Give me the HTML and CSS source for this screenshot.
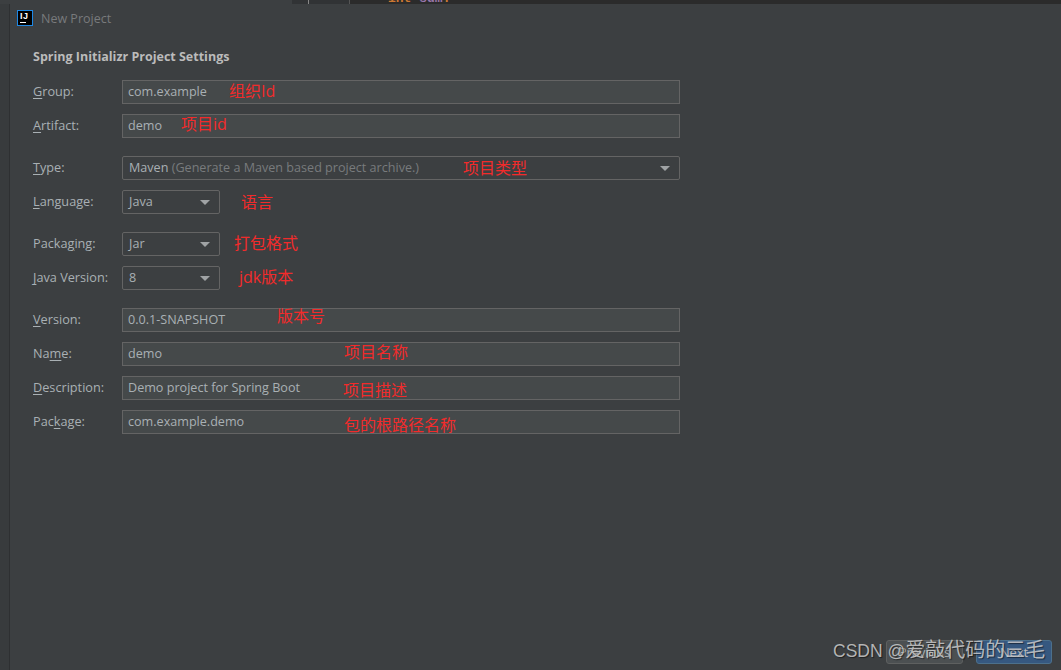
FILE: index.html
```html
<!DOCTYPE html>
<html lang="zh">
<head>
<meta charset="utf-8">
<title>New Project</title>
<link rel="stylesheet" href="styles.css">
</head>
<body>
<div class="editor-strip">
  <div class="strip-left"></div>
  <div class="strip-gutter"><span class="fold"></span></div>
  <div class="strip-code"><span class="kw">int</span> <span class="var">sum</span><span class="kw">:</span></div>
</div>
<div class="window">
  <div class="side"></div>
  <main class="dialog">
    <header class="titlebar">
      <span class="logo"><span class="logo-text">IJ</span><span class="logo-bar"></span></span>
      <span class="title">New Project</span>
    </header>
    <section class="form">
      <h1 class="heading">Spring Initializr Project Settings</h1>

      <div class="group">
        <div class="row"><label class="label"><u>G</u>roup:</label><div class="field input">com.example</div><span class="note note-group">组织Id</span></div>
        <div class="row"><label class="label"><u>A</u>rtifact:</label><div class="field input">demo</div><span class="note note-artifact">项目id</span></div>
      </div>

      <div class="group">
        <div class="row"><label class="label"><u>T</u>ype:</label><div class="field select"><span class="val">Maven <span class="hint">(Generate a Maven based project archive.)</span></span><span class="arrow"></span></div><span class="note note-type">项目类型</span></div>
        <div class="row"><label class="label"><u>L</u>anguage:</label><div class="field select small"><span class="val">Java</span><span class="arrow"></span></div><span class="note note-lang">语言</span></div>
      </div>

      <div class="group">
        <div class="row"><label class="label">Packa<u>g</u>ing:</label><div class="field select small"><span class="val">Jar</span><span class="arrow"></span></div><span class="note note-pack">打包格式</span></div>
        <div class="row"><label class="label"><u>J</u>ava Version:</label><div class="field select small"><span class="val">8</span><span class="arrow"></span></div><span class="note note-jdk">jdk版本</span></div>
      </div>

      <div class="group">
        <div class="row"><label class="label"><u>V</u>ersion:</label><div class="field input">0.0.1-SNAPSHOT</div><span class="note note-version">版本号</span></div>
        <div class="row"><label class="label">Na<u>m</u>e:</label><div class="field input">demo</div><span class="note note-name">项目名称</span></div>
        <div class="row"><label class="label"><u>D</u>escription:</label><div class="field input">Demo project for Spring Boot</div><span class="note note-desc">项目描述</span></div>
        <div class="row"><label class="label">Pac<u>k</u>age:</label><div class="field input">com.example.demo</div><span class="note note-pkg">包的根路径名称</span></div>
      </div>
    </section>
    <footer class="footer">
      <button class="btn">Previous</button>
      <button class="btn primary">Next</button>
    </footer>
  </main>
</div>
<div class="watermark"><span class="wm-latin">CSDN @</span>爱敲代码的三毛</div>
</body>
</html>
```
FILE: styles.css
```css
* { box-sizing: border-box; }
html, body { margin: 0; height: 100%; overflow: hidden; }
body {
  background: #3c3f41;
  font-family: "Open Sans", "Noto Sans CJK SC", sans-serif;
  display: flex;
  flex-direction: column;
  position: relative;
}
.editor-strip { display: flex; height: 4px; flex: none; overflow: hidden; }
.strip-left { width: 292px; background: #3c3f41; }
.strip-gutter { width: 58px; background: #313335; border-right: 1px solid #555; position: relative; }
.fold { display: block; width: 4px; height: 4px; border-right: 1px solid #888; margin-left: 13px; }
.strip-code {
  flex: 1;
  background: #2b2b2b;
  padding-left: 38px;
  font: bold 13px/1 "Liberation Mono", monospace;
  color: #9876aa;
  white-space: pre;
  margin-top: 0;
}
.strip-code span { position: relative; top: -8px; }
.strip-code .kw { color: #cc7832; }
.window { flex: 1; display: flex; min-height: 0; }
.side { width: 10px; background: #383b3d; border-right: 1px solid #2e3032; flex: none; }
.dialog { flex: 1; display: flex; flex-direction: column; background: #3c3f41; }
.titlebar { display: flex; align-items: center; height: 28px; padding-left: 7px; gap: 8px; flex: none; }
.logo {
  width: 16px; height: 16px; background: #000; border: 1px solid #1e88e5;
  display: flex; flex-direction: column; padding-left: 2px; position: relative;
}
.logo-text { font: bold 9px/10px "Liberation Sans", sans-serif; color: #fff; letter-spacing: 0.5px; }
.logo-bar { width: 6px; height: 1px; background: #fff; margin-top: 1px; }
.title { font-size: 12.5px; color: #787a7c; }
.form { padding: 15px 0 0 23px; width: 670px; }
.heading { margin: 0 0 13px; font-size: 12.5px; line-height: 20px; font-weight: 700; color: #bbbbbb; }
.group { display: flex; flex-direction: column; gap: 10px; margin-bottom: 18px; }
.row { display: flex; align-items: center; height: 24px; position: relative; }
.label { width: 89px; font-size: 12.7px; color: #a9b0b4; flex: none; padding-bottom: 2px; }
.label u { text-underline-offset: 2px; }
.field { height: 24px; font-size: 12.6px; color: #a9b0b4; display: flex; align-items: center; padding-bottom: 2px; }
.input { flex: 1; background: #45494a; border: 1px solid #646464; padding-left: 5px; }
.select { flex: 1; border: 1px solid #646464; border-radius: 2px; padding: 0 9px 2px 6px; justify-content: space-between; }
.small { flex: none; width: 98px; }
.hint { color: #787b7d; }
.arrow { width: 0; height: 0; margin-top: 2px; border-left: 5px solid transparent; border-right: 5px solid transparent; border-top: 5px solid #a0a3a5; }
.note { position: absolute; color: #f22b2b; font-size: 16px; line-height: 20px; white-space: nowrap; font-family: "Open Sans", "Noto Sans CJK SC", sans-serif; }
.note-group { left: 196px; top: 1px; }
.note-artifact { left: 148px; top: 0; }
.note-type { left: 430px; top: 2px; }
.note-lang { left: 208px; top: 2px; }
.note-pack { left: 201px; top: 1px; }
.note-jdk { left: 206px; top: 1px; }
.note-version { left: 244px; top: -2px; }
.note-name { left: 311px; top: 0; }
.note-desc { left: 310px; top: 4px; }
.note-pkg { left: 311px; top: 5px; }
.footer { margin-top: auto; display: flex; justify-content: flex-end; gap: 13px; padding: 0 9px 6px 0; }
.btn { width: 77px; height: 24px; font: 12.8px "Open Sans", sans-serif; color: #a9b0b4; background: #4c5052; border: 1px solid #5e6060; border-radius: 3px; padding: 0; }
.primary { width: 76px; background: #365880; border-color: #4c708c; color: #bbbbbb; }
.watermark {
  position: absolute; left: 833px; top: 638px;
  font: 20px/24px "Liberation Sans", "Noto Sans CJK SC", sans-serif;
  color: rgba(205, 205, 205, 0.85);
  text-shadow: 1px 1px 1px rgba(0, 0, 0, 0.5);
  white-space: nowrap;
}
.wm-latin { font-size: 17.5px; }
```
